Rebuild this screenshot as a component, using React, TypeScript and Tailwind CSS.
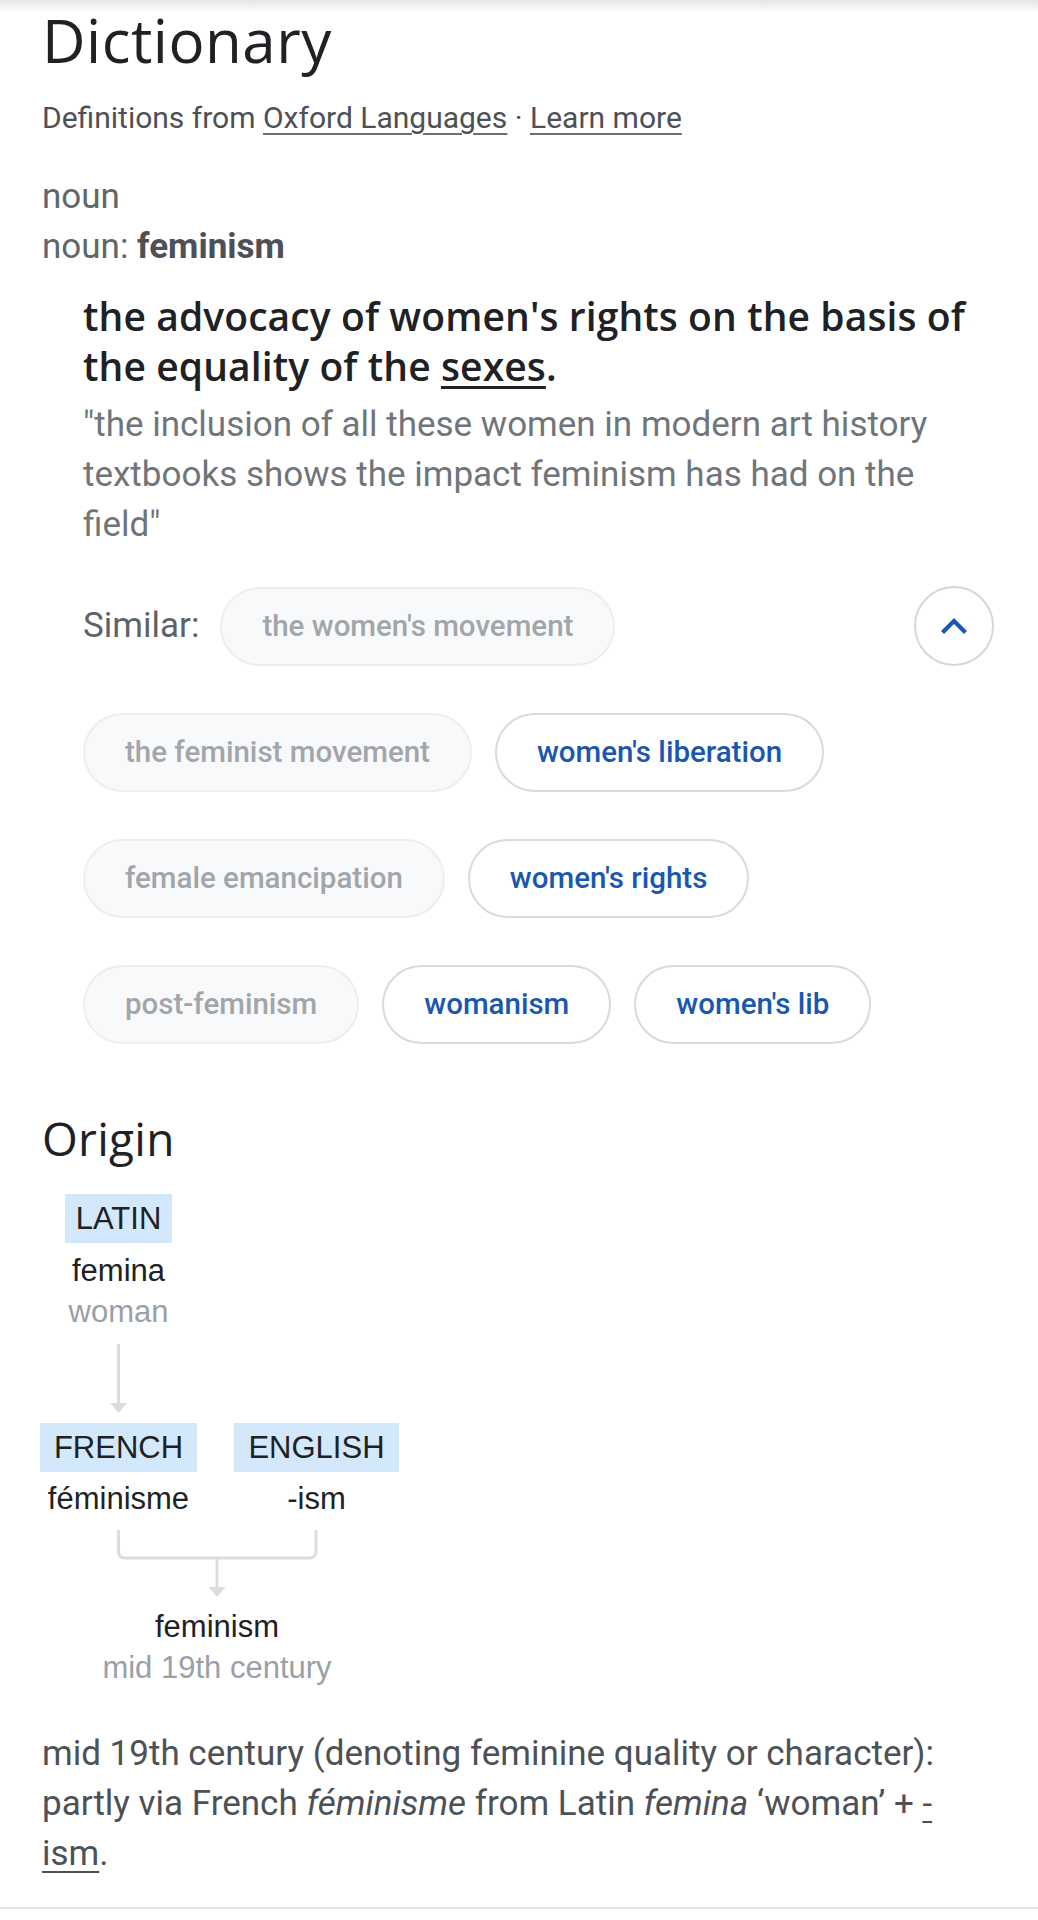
import React from "react";

const grayChip =
  "h-[79px] flex items-center px-10 rounded-full border-2 border-[#eceef0] bg-[#f8f9fa] text-[29.5px] font-medium text-[#a2a6aa] whitespace-nowrap";
const blueChip =
  "h-[79px] flex items-center px-10 rounded-full border-2 border-[#d9dadd] bg-white text-[29.5px] font-medium text-[#1a57b0] whitespace-nowrap";

const tag =
  "h-[49px] flex items-center justify-center px-[11px] bg-[#d3e8fb] text-[31px] text-[#202124] leading-none";

export default function App() {
  return (
    <div className="relative bg-white min-h-[1920px] font-['Roboto',sans-serif]">
      <div className="absolute top-0 inset-x-0 h-[12px] bg-linear-to-b from-[#e4e4e4] to-white pointer-events-none" />
      <div className="pl-[42px] pr-[44px] pt-[4px]">
        <h1 className="font-['Open_Sans',sans-serif] text-[60px] leading-[72px] font-normal tracking-[0.5px] text-[#202124]">
          Dictionary
        </h1>
        <p className="mt-[22px] text-[30px] leading-[40px] text-[#4d5156]">
          Definitions from{" "}
          <a className="underline decoration-2 underline-offset-[5px] decoration-[#6f6f6f]">
            Oxford Languages
          </a>{" "}
          ·{" "}
          <a className="underline decoration-2 underline-offset-[5px] decoration-[#6f6f6f]">
            Learn more
          </a>
        </p>

        <div className="mt-[34px] text-[35px] leading-[50px] text-[#62666a]">
          <div>noun</div>
          <div>
            noun: <span className="font-bold text-[#4d5156]">feminism</span>
          </div>
        </div>

        <div className="ml-[41px] mt-[19px]">
          <p className="font-['Open_Sans',sans-serif] text-[39px] leading-[50px] font-semibold tracking-[0.1px] text-[#202124]">
            the advocacy of women's rights on the basis of the equality of the{" "}
            <span className="underline decoration-[3px] underline-offset-[5px]">sexes</span>.
          </p>
          <p className="mt-[9px] text-[35px] leading-[50px] text-[#70757a]">
            "the inclusion of all these women in modern art history textbooks shows the impact feminism has had on the field"
          </p>

          <div className="mt-[36px] flex flex-col gap-[47px]">
            <div className="flex items-center">
              <span className="text-[35px] text-[#5f6368] mr-[21px]">Similar:</span>
              <span className={grayChip}>the women's movement</span>
              <span className="ml-auto w-[80px] h-[80px] rounded-full border-2 border-[#d6d7d9] flex items-center justify-center">
                <svg width="26" height="16" viewBox="0 0 26 16">
                  <polyline
                    points="3,13 13,3 23,13"
                    fill="none"
                    stroke="#1a57b0"
                    strokeWidth="4.2"
                    strokeLinecap="square"
                  />
                </svg>
              </span>
            </div>
            <div className="flex items-center gap-[23px]">
              <span className={grayChip}>the feminist movement</span>
              <span className={blueChip}>women's liberation</span>
            </div>
            <div className="flex items-center gap-[23px]">
              <span className={grayChip}>female emancipation</span>
              <span className={blueChip}>women's rights</span>
            </div>
            <div className="flex items-center gap-[23px]">
              <span className={grayChip}>post-feminism</span>
              <span className={blueChip}>womanism</span>
              <span className={blueChip}>women's lib</span>
            </div>
          </div>
        </div>

        <h2 className="mt-[66px] font-['Open_Sans',sans-serif] text-[46px] leading-[56px] font-normal tracking-[0.3px] text-[#202124]">
          Origin
        </h2>

        <div className="relative mt-[28px] -ml-[2px] h-[500px] font-['Liberation_Sans',Arial,sans-serif]">
          <div className="absolute left-0 top-0 w-[157px] flex flex-col items-center">
            <span className={tag}>LATIN</span>
            <span className="mt-[7px] text-[31px] leading-[41px] text-[#202124]">femina</span>
            <span className="text-[31px] leading-[41px] text-[#9aa0a6]">woman</span>
          </div>
          <svg className="absolute left-[70px] top-[150px]" width="17" height="70" viewBox="0 0 17 70">
            <line x1="8.5" y1="0" x2="8.5" y2="60" stroke="#dadce0" strokeWidth="3" />
            <polygon points="0,59 17,59 8.5,69" fill="#dadce0" />
          </svg>

          <div className="absolute left-0 top-[229px] w-[157px] flex flex-col items-center">
            <span className={tag + " w-[157px]"}>FRENCH</span>
            <span className="mt-[6px] text-[31px] leading-[41px] text-[#202124]">féminisme</span>
          </div>
          <div className="absolute left-[194px] top-[229px] w-[165px] flex flex-col items-center">
            <span className={tag + " w-[165px]"}>ENGLISH</span>
            <span className="mt-[6px] text-[31px] leading-[41px] text-[#202124]">-ism</span>
          </div>

          <svg className="absolute left-[70px] top-[330px]" width="216" height="74" viewBox="0 0 216 74">
            <path
              d="M8.5 6 V27 Q8.5 34 15.5 34 H199 Q206 34 206 27 V6"
              fill="none"
              stroke="#dadce0"
              strokeWidth="3"
            />
            <line x1="107" y1="34" x2="107" y2="64" stroke="#dadce0" strokeWidth="3" />
            <polygon points="98.5,63 115.5,63 107,73" fill="#dadce0" />
          </svg>

          <div className="absolute left-[27px] top-[412px] w-[300px] flex flex-col items-center">
            <span className="text-[31px] leading-[41px] text-[#202124]">feminism</span>
            <span className="text-[31px] leading-[41px] text-[#9aa0a6]">mid 19th century</span>
          </div>
        </div>

        <p className="mt-[35px] text-[35px] leading-[50px] text-[#4d5156]">
          mid 19th century (denoting feminine quality or character): partly via French{" "}
          <i>féminisme</i> from Latin <i>femina</i> ‘woman’ +{" "}
          <a className="underline decoration-2 underline-offset-[6px]">
            -<br />ism
          </a>
          .
        </p>
      </div>
      <div className="mt-[28px] h-[2px] bg-[#e3e3e3]" />
    </div>
  );
}
